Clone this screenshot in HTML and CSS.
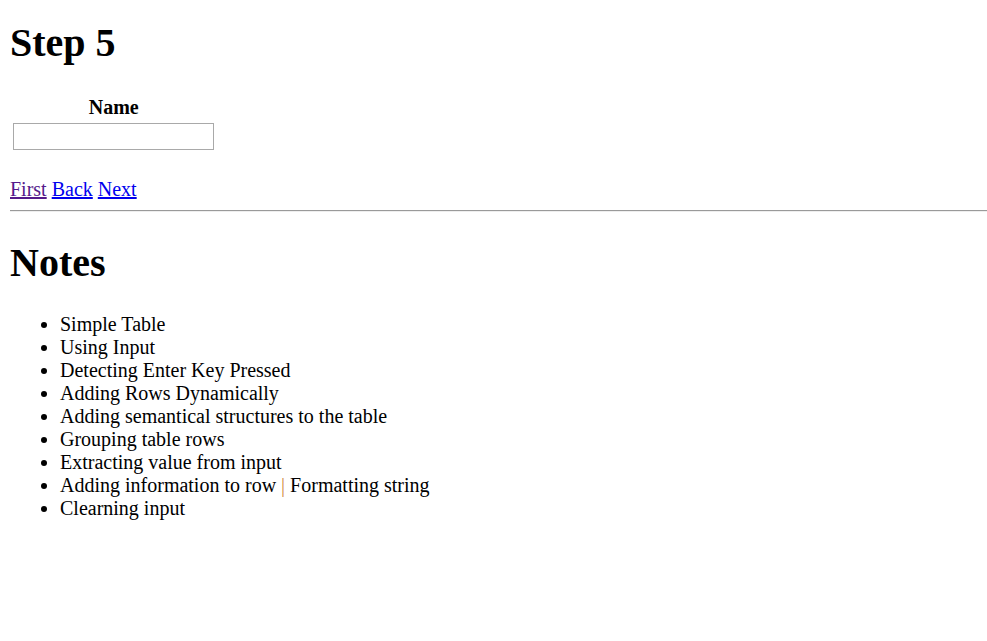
FILE: index.html
```html
<!DOCTYPE html>
<html>
<head>
<meta charset="utf-8">
<link rel="stylesheet" href="styles.css">
</head>
<body>
<h1 class="title title-first">Step 5</h1>
<table class="form-table">
  <thead>
    <tr><th class="head">Name</th></tr>
  </thead>
  <tbody>
    <tr><td class="cell"><input class="name-input" type="text"></td></tr>
  </tbody>
</table>
<p class="nav"><a class="link visited" href="#first">First</a> <a class="link" href="#back">Back</a> <a class="link" href="#next">Next</a></p>
<hr class="rule">
<h1 class="title title-notes">Notes</h1>
<ul class="notes">
  <li>Simple Table</li>
  <li>Using Input</li>
  <li>Detecting Enter Key Pressed</li>
  <li>Adding Rows Dynamically</li>
  <li>Adding semantical structures to the table</li>
  <li>Grouping table rows</li>
  <li>Extracting value from input</li>
  <li>Adding information to row <span class="sep">|</span> Formatting string</li>
  <li>Clearning input</li>
</ul>
</body>
</html>
```
FILE: styles.css
```css
html { background: #fff; }
body {
  margin: 0 0 0 10px;
  font-family: "Liberation Serif", "Times New Roman", serif;
  font-size: 20px;
  line-height: 23px;
  color: #000;
}
.title {
  font-size: 40px;
  line-height: 46px;
  font-weight: bold;
  margin: 26.8px 0;
}
.title-first { margin-top: 19.8px; }
.title-notes { margin-top: 28.8px; }
.form-table {
  border-spacing: 2.5px;
  border-collapse: separate;
  margin: 0;
}
.head, .cell {
  padding: 1.25px;
  font-weight: bold;
  text-align: center;
}
.name-input {
  box-sizing: border-box;
  width: 201px;
  height: 27px;
  border: 1px solid #a9a9a9;
  padding: 1px 2px;
  margin: 0;
  font-size: 16px;
  display: block;
  background: #fff;
}
.nav { margin: 24px 0 0; }
.link { color: #0000ee; text-decoration: underline; }
.link.visited { color: #551a8b; }
.rule {
  margin: 9px 0 10px;
  border: none;
  border-top: 1px solid #9a9a9a;
  border-bottom: 1px solid #eee;
  height: 0;
}
.notes {
  margin: 20px 0;
  padding-left: 50px;
}
.sep { color: #d08a3c; }
```
